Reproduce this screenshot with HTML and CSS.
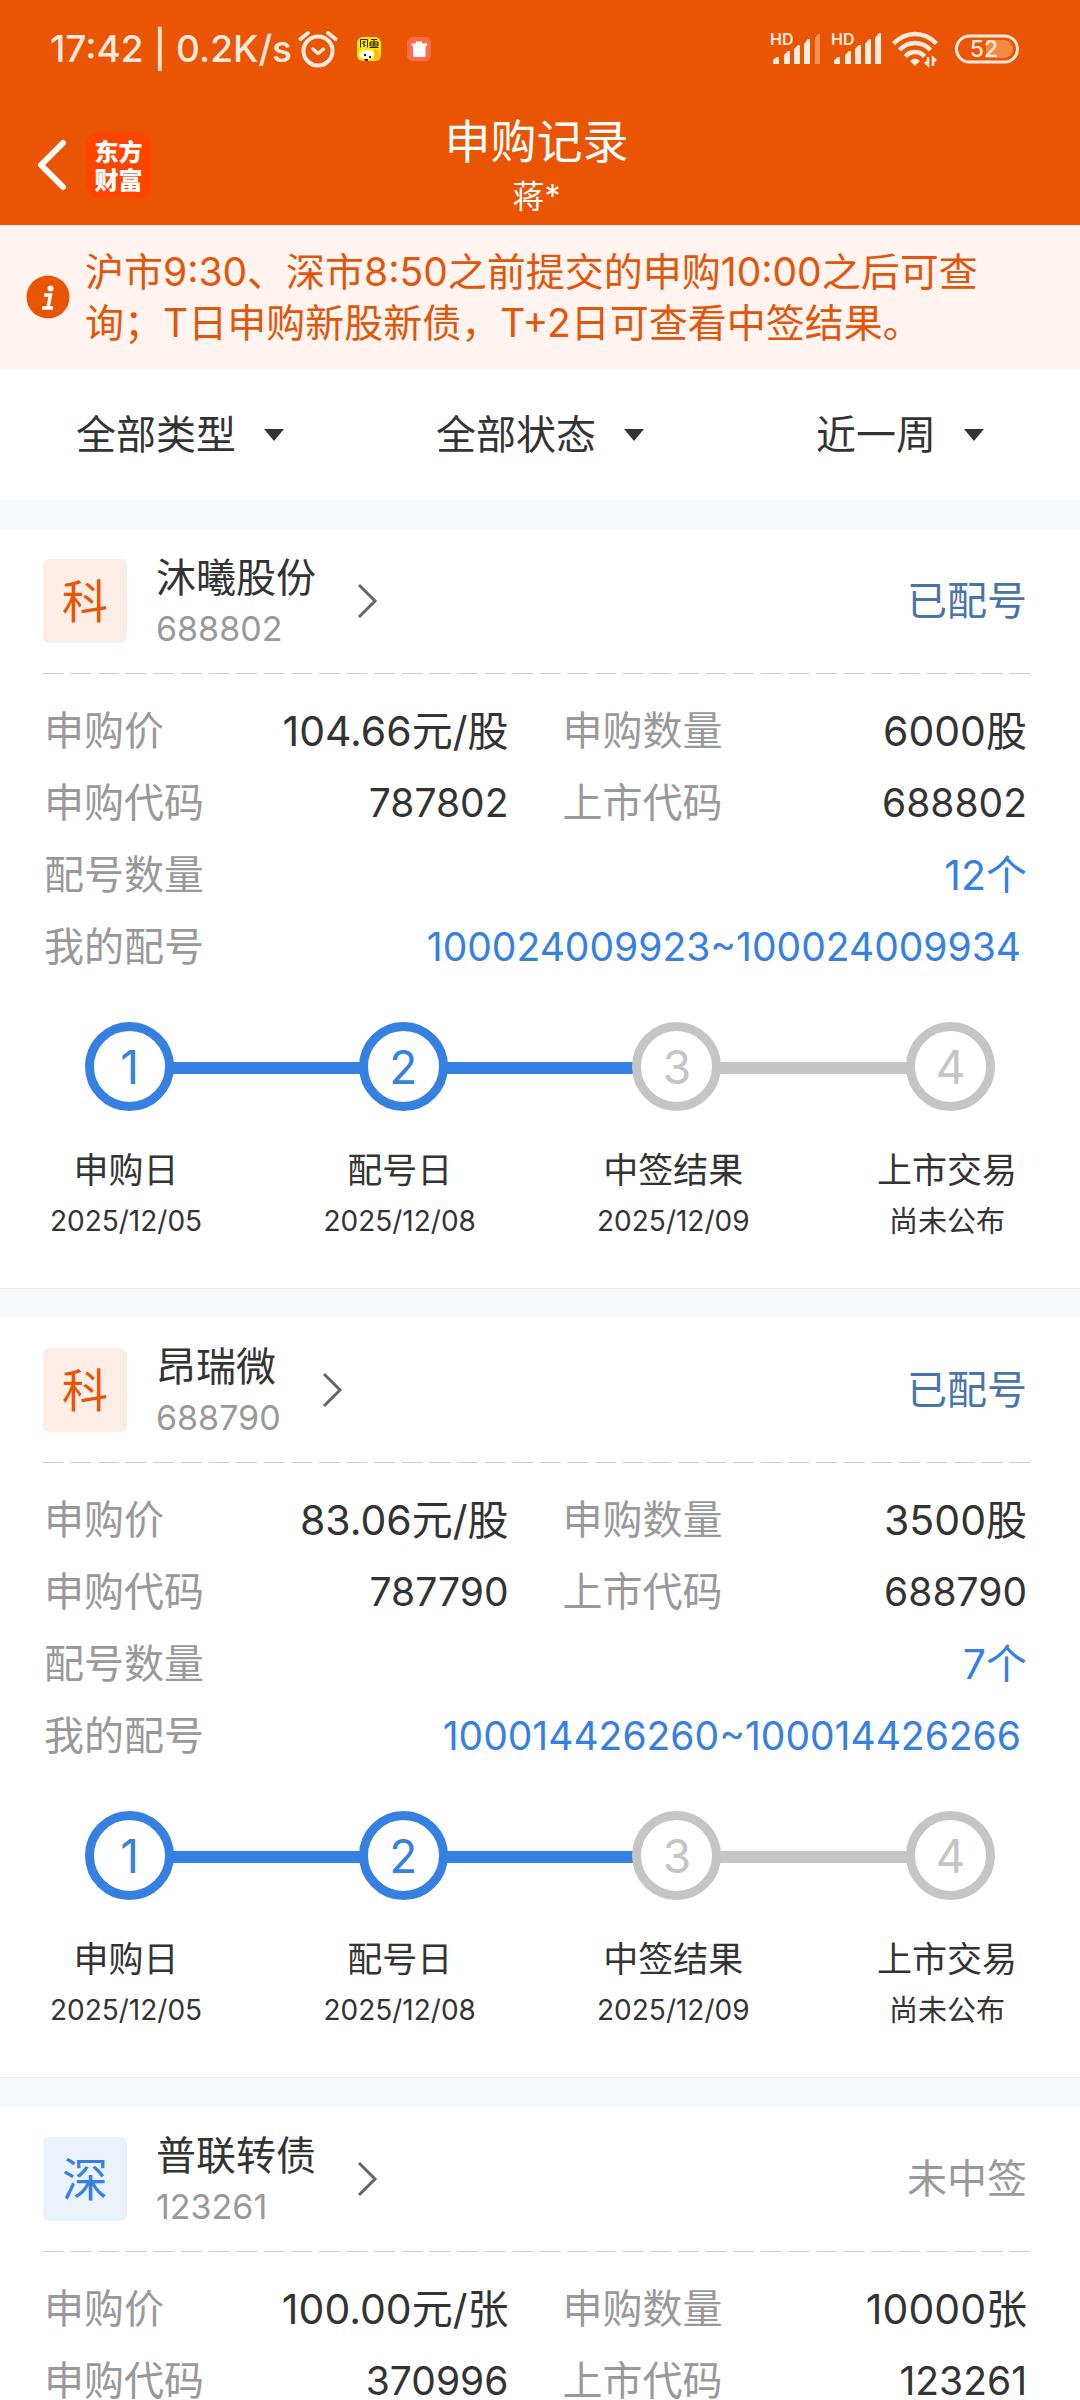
FILE: index.html
```html
<!DOCTYPE html>
<html lang="zh-CN">
<head>
<meta charset="utf-8">
<meta name="viewport" content="width=device-width, initial-scale=1">
<title>申购记录</title>
<link rel="stylesheet" href="styles.css">
</head>
<body>
<header class="header">
  <div class="status-bar">
    <div class="status-left">
      <span class="clock">17:42 | 0.2K/s</span>
      <svg class="alarm" viewBox="0 0 40 38" aria-hidden="true">
        <circle cx="20" cy="21" r="14.5" fill="none" stroke="currentColor" stroke-width="4"/>
        <path d="M2.500 9 10 3M37.500 9 30 3" fill="none" stroke="currentColor" stroke-width="4" stroke-linecap="round"/>
        <path d="m15 19 5 4.500 5.500-4.500" fill="none" stroke="currentColor" stroke-width="3.500" stroke-linecap="round" stroke-linejoin="round"/>
      </svg>
      <svg class="app-icon app-fish" viewBox="0 0 24 24" aria-hidden="true">
        <rect width="24" height="24" rx="6" fill="#ffe60f"/>
        <path d="M3.500 2.500v8M3.500 2.500h7v8M5.500 5h3M7 4v6M5.500 6l3 3M14 2.500h6M13 5h8v4h-8zM17 3v6M13 7h8M12.500 10.500h9" fill="none" stroke="#2b2600" stroke-width="1"/>
        <path d="M17 13h5v8l-5 2z" fill="#ffb800"/>
        <ellipse cx="10" cy="17.500" rx="7.500" ry="4.500" fill="#fff"/>
        <circle cx="8" cy="18" r="1.200" fill="#222"/><circle cx="13" cy="20" r="1.200" fill="#222"/>
        <path d="M7 22h4v2H8z" fill="#6d1616"/>
      </svg>
      <svg class="app-icon" viewBox="0 0 24 24" aria-hidden="true">
        <rect width="24" height="24" rx="6" fill="#ff6c4c"/>
        <path d="M9 4.500h6v2h5v2.500h-1.500v9.500q0 1.500-1.500 1.500H7.500q-1.500 0-1.500-1.500V9H4.500V6.500H9z" fill="#fff"/>
      </svg>
    </div>
    <div class="status-right">
      <svg class="signal" viewBox="0 0 52 34" aria-hidden="true">
        <text class="hd" x="0" y="13">HD</text>
        <path d="M3 32v-4l4-3h2v7zM14 32V23l4-4h2v13zM24 32V17l4-4h2v19zM34 32V12l4-5h2v25z" fill="currentColor"/>
        <path d="M45 32V6l3-4h2v30z" fill="currentColor" opacity=".4"/>
      </svg>
      <svg class="signal" viewBox="0 0 52 34" aria-hidden="true">
        <text class="hd" x="0" y="13">HD</text>
        <path d="M3 32v-4l4-3h2v7zM14 32V23l4-4h2v13zM24 32V17l4-4h2v19zM34 32V12l4-5h2v25zM44 32V6l4-5h2v31z" fill="currentColor"/>
      </svg>
      <svg class="wifi" viewBox="0 0 46 36" aria-hidden="true">
        <g fill="none" stroke="currentColor" stroke-width="4.500">
          <path d="M1.500 12.500Q11 3 23 3t21.500 9.500"/>
          <path d="M7.500 19Q14 12 23 12t15.500 7"/>
          <path d="M13.500 25.500Q17 21 23 21t9.500 4.500"/>
        </g>
        <path d="M23 35l-5-5q5-5 10 0z" fill="currentColor"/>
        <path d="M36 26v8l-3-3M41 35v-8l3 3" fill="none" stroke="currentColor" stroke-width="2.500"/>
      </svg>
      <svg class="battery" viewBox="0 0 64 30" aria-hidden="true">
        <path d="M31 6h18a9 9 0 0 1 0 18H31z" fill="#ffb27e" opacity=".55"/>
        <rect x="1.500" y="2" width="61" height="26" rx="13" fill="none" stroke="currentColor" stroke-width="3"/>
        <text class="level" x="29" y="23" text-anchor="middle">52</text>
      </svg>
    </div>
  </div>
  <nav class="nav">
    <div class="nav-left">
      <button class="back" type="button" aria-label="返回">
        <svg viewBox="0 0 30 52" aria-hidden="true"><path d="M27 4 5 26l22 22" fill="none" stroke="#fff" stroke-width="6" stroke-linecap="round" stroke-linejoin="round"/></svg>
      </button>
      <a class="logo" href="#">东方<br>财富</a>
    </div>
    <div class="nav-title">
      <h1>申购记录</h1>
      <p>蒋*</p>
    </div>
  </nav>
</header>

<aside class="notice">
  <svg class="info" viewBox="0 0 44 44" aria-hidden="true">
    <circle cx="22" cy="22" r="21.500" fill="#ea5504"/>
    <circle cx="24.500" cy="13.500" r="3" fill="#fff"/>
    <path d="M18 20h6.500l-2.500 12.500M16 33h11" fill="none" stroke="#fff" stroke-width="3.500"/>
  </svg>
  <p>沪市9:30、深市8:50之前提交的申购10:00之后可查询；T日申购新股新债，T+2日可查看中签结果。</p>
</aside>

<form class="filters">
  <label class="filter"><select aria-label="类型"><option>全部类型</option></select><svg viewBox="0 0 20 12" aria-hidden="true"><path d="M0 0h20L10 12z" fill="#333"/></svg></label>
  <label class="filter"><select aria-label="状态"><option>全部状态</option></select><svg viewBox="0 0 20 12" aria-hidden="true"><path d="M0 0h20L10 12z" fill="#333"/></svg></label>
  <label class="filter"><select aria-label="时间"><option>近一周</option></select><svg viewBox="0 0 20 12" aria-hidden="true"><path d="M0 0h20L10 12z" fill="#333"/></svg></label>
</form>

<main class="records">
  <article class="card">
    <div class="card-head">
      <span class="badge">科</span>
      <a class="stock" href="#">
        <span class="stock-text"><span class="name">沐曦股份</span><span class="code">688802</span></span>
        <svg class="chevron" viewBox="0 0 20 34" aria-hidden="true"><path d="m2 1 16 16L2 33" fill="none" stroke="#666" stroke-width="3"/></svg>
      </a>
      <span class="state">已配号</span>
    </div>
    <dl class="details">
      <div><dt>申购价</dt><dd>104.66元/股</dd></div>
      <div><dt>申购数量</dt><dd>6000股</dd></div>
      <div><dt>申购代码</dt><dd class="num">787802</dd></div>
      <div><dt>上市代码</dt><dd class="num">688802</dd></div>
      <div class="wide"><dt>配号数量</dt><dd><a href="#">12个</a></dd></div>
      <div class="wide"><dt>我的配号</dt><dd class="num"><a class="range" href="#">100024009923~100024009934</a></dd></div>
    </dl>
    <div class="track" aria-hidden="true">
      <span class="dot done">1</span><span class="line done"></span><span class="dot done">2</span><span class="line done"></span><span class="dot">3</span><span class="line"></span><span class="dot">4</span>
    </div>
    <ol class="steps">
      <li><span>申购日</span><time>2025/12/05</time></li>
      <li><span>配号日</span><time>2025/12/08</time></li>
      <li><span>中签结果</span><time>2025/12/09</time></li>
      <li><span>上市交易</span><small>尚未公布</small></li>
    </ol>
  </article>

  <article class="card">
    <div class="card-head">
      <span class="badge">科</span>
      <a class="stock" href="#">
        <span class="stock-text"><span class="name">昂瑞微</span><span class="code">688790</span></span>
        <svg class="chevron" viewBox="0 0 20 34" aria-hidden="true"><path d="m2 1 16 16L2 33" fill="none" stroke="#666" stroke-width="3"/></svg>
      </a>
      <span class="state">已配号</span>
    </div>
    <dl class="details">
      <div><dt>申购价</dt><dd>83.06元/股</dd></div>
      <div><dt>申购数量</dt><dd>3500股</dd></div>
      <div><dt>申购代码</dt><dd class="num">787790</dd></div>
      <div><dt>上市代码</dt><dd class="num">688790</dd></div>
      <div class="wide"><dt>配号数量</dt><dd><a href="#">7个</a></dd></div>
      <div class="wide"><dt>我的配号</dt><dd class="num"><a class="range" href="#">100014426260~100014426266</a></dd></div>
    </dl>
    <div class="track" aria-hidden="true">
      <span class="dot done">1</span><span class="line done"></span><span class="dot done">2</span><span class="line done"></span><span class="dot">3</span><span class="line"></span><span class="dot">4</span>
    </div>
    <ol class="steps">
      <li><span>申购日</span><time>2025/12/05</time></li>
      <li><span>配号日</span><time>2025/12/08</time></li>
      <li><span>中签结果</span><time>2025/12/09</time></li>
      <li><span>上市交易</span><small>尚未公布</small></li>
    </ol>
  </article>

  <article class="card card-open">
    <div class="card-head">
      <span class="badge badge-blue">深</span>
      <a class="stock" href="#">
        <span class="stock-text"><span class="name">普联转债</span><span class="code">123261</span></span>
        <svg class="chevron" viewBox="0 0 20 34" aria-hidden="true"><path d="m2 1 16 16L2 33" fill="none" stroke="#666" stroke-width="3"/></svg>
      </a>
      <span class="state state-miss">未中签</span>
    </div>
    <dl class="details">
      <div><dt>申购价</dt><dd>100.00元/张</dd></div>
      <div><dt>申购数量</dt><dd>10000张</dd></div>
      <div><dt>申购代码</dt><dd class="num">370996</dd></div>
      <div><dt>上市代码</dt><dd class="num">123261</dd></div>
    </dl>
  </article>
</main>
</body>
</html>
```
FILE: styles.css
```css
:root {
  --brand: #ea5504;
  --ink: #333;
  --muted: #999;
  --blue: #3580e0;
  --idle: #c5c5c5;
}

* {
  box-sizing: border-box;
  margin: 0;
  padding: 0;
}

body {
  background: #f7f8fa;
  color: var(--ink);
  font-family: Inter, "Noto Sans CJK SC", sans-serif;
  font-size: 40px;
  line-height: 40px;
}

a {
  color: inherit;
  text-decoration: none;
}

svg {
  display: block;
  flex: none;
  overflow: visible;
}

/* Header */
.header {
  background: var(--brand);
  color: #fff;
}

.status-bar {
  display: flex;
  justify-content: space-between;
  align-items: center;
  height: 98px;
  padding: 0 61px 0 50px;
  color: #ffeadd;
}

.status-left,
.status-right {
  display: flex;
  align-items: center;
}

.clock {
  margin-right: 6px;
  font-size: 37px;
  font-weight: 500;
}

.alarm {
  width: 40px;
  height: 38px;
}

.app-icon {
  width: 24px;
  height: 24px;
}

.app-fish {
  margin: 0 26px 0 19px;
}

.status-right {
  gap: 9px;
}

.signal {
  width: 52px;
  height: 34px;
}

.hd {
  fill: currentColor;
  font-size: 16px;
  font-weight: 600;
}

.wifi {
  width: 46px;
  height: 36px;
}

.battery {
  width: 64px;
  height: 30px;
  margin-left: 8px;
}

.level {
  fill: currentColor;
  font-size: 23px;
  font-weight: 500;
}

.nav {
  display: grid;
  grid-template-columns: 1fr auto 1fr;
  height: 127px;
  padding: 0 43px 0 36px;
}

.nav-left {
  display: flex;
  align-items: center;
  gap: 20px;
  padding-top: 6px;
}

.back {
  border: 0;
  background: none;
}

.back svg {
  width: 30px;
  height: 52px;
}

.logo {
  display: grid;
  place-content: center;
  width: 65px;
  height: 66px;
  border-radius: 14px;
  background: #ff4400;
  font-family: "Noto Sans CJK SC", sans-serif;
  font-size: 24px;
  font-weight: 900;
  line-height: 28px;
}

.nav-title {
  padding-top: 15px;
  text-align: center;
}

.nav-title h1 {
  font-size: 46px;
  font-weight: 400;
  line-height: 56px;
}

.nav-title p {
  font-size: 32px;
  line-height: 56px;
}

/* Notice */
.notice {
  display: flex;
  align-items: center;
  gap: 15px;
  padding: 21px 80px 21px 26px;
  background: #fff4ef;
  color: #e2560c;
}

.notice p {
  font-size: 39px;
  line-height: 51px;
}

.info {
  width: 44px;
  height: 44px;
}

/* Filters */
.filters {
  display: grid;
  grid-template-columns: repeat(3, 1fr);
  height: 131px;
  background: #fff;
}

.filter {
  display: flex;
  align-items: center;
  justify-content: center;
  gap: 28px;
}

.filter select {
  appearance: none;
  border: 0;
  background: none;
  color: inherit;
  font: inherit;
  line-height: 56px;
}

.filter svg {
  width: 20px;
  height: 12px;
}

/* Records */
.records {
  display: grid;
  gap: 29px;
  padding-top: 29px;
}

.card {
  padding: 30px 50px 42px 43px;
  border-bottom: 1px solid #ececee;
  background: #fff;
}

.card-open {
  padding-bottom: 0;
  border-bottom: 0;
}

.card-head {
  display: flex;
  align-items: center;
  gap: 29px;
  height: 84px;
  padding-right: 3px;
}

.badge {
  display: grid;
  place-content: center;
  width: 84px;
  height: 84px;
  border-radius: 6px;
  background: #fceee6;
  color: var(--brand);
  font-size: 46px;
}

.badge-blue {
  background: #eaf2fc;
  color: var(--blue);
}

.stock {
  display: flex;
  align-items: center;
  gap: 41px;
}

.stock-text {
  display: grid;
  padding-top: 3px;
  line-height: 51px;
}

.code {
  color: var(--muted);
  font-size: 34px;
}

.chevron {
  width: 20px;
  height: 34px;
}

.state {
  margin-left: auto;
  color: #4674ab;
}

.state-miss {
  color: var(--muted);
}

.details {
  display: grid;
  grid-template-columns: 1fr 1fr;
  gap: 32px 54px;
  margin-top: 30px;
  padding: 38px 3px 0 1px;
  position: relative;
}

.details::before {
  position: absolute;
  inset: 0 -7px auto 0;
  height: 1px;
  background: linear-gradient(90deg, #ccc 76%, transparent 76%) 0 0 / calc(100% / 36) 1px;
  content: "";
}

.details div {
  display: flex;
  justify-content: space-between;
}

.details .wide {
  grid-column: 1 / -1;
}

.details dt {
  color: var(--muted);
}

.details dd {
  font-size: 41px;
}

.details .num {
  font-size: 39px;
}

.details a {
  color: var(--blue);
}

.range {
  padding-right: 6px;
}

/* Progress */
.track {
  display: flex;
  align-items: center;
  margin-top: 55px;
  padding: 0 35px 0 42px;
}

.dot {
  display: grid;
  place-content: center;
  position: relative;
  width: 89px;
  height: 89px;
  border: 9px solid var(--idle);
  border-radius: 50%;
  background: #fff;
  color: var(--idle);
  font-size: 46px;
}

.dot.done {
  border-color: var(--blue);
  color: var(--blue);
}

.line {
  flex: 1;
  height: 12px;
  margin: 2px -3px 0;
  background: var(--idle);
}

.line.done {
  background: var(--blue);
}

.steps {
  display: flex;
  justify-content: space-between;
  margin-top: 34px;
  margin-bottom: -1px;
  list-style: none;
}

.steps li {
  display: grid;
  width: 166px;
  font-size: 35px;
  line-height: 51px;
  text-align: center;
}

.steps time {
  font-size: 28px;
}

.steps small {
  font-size: 29px;
}
```
